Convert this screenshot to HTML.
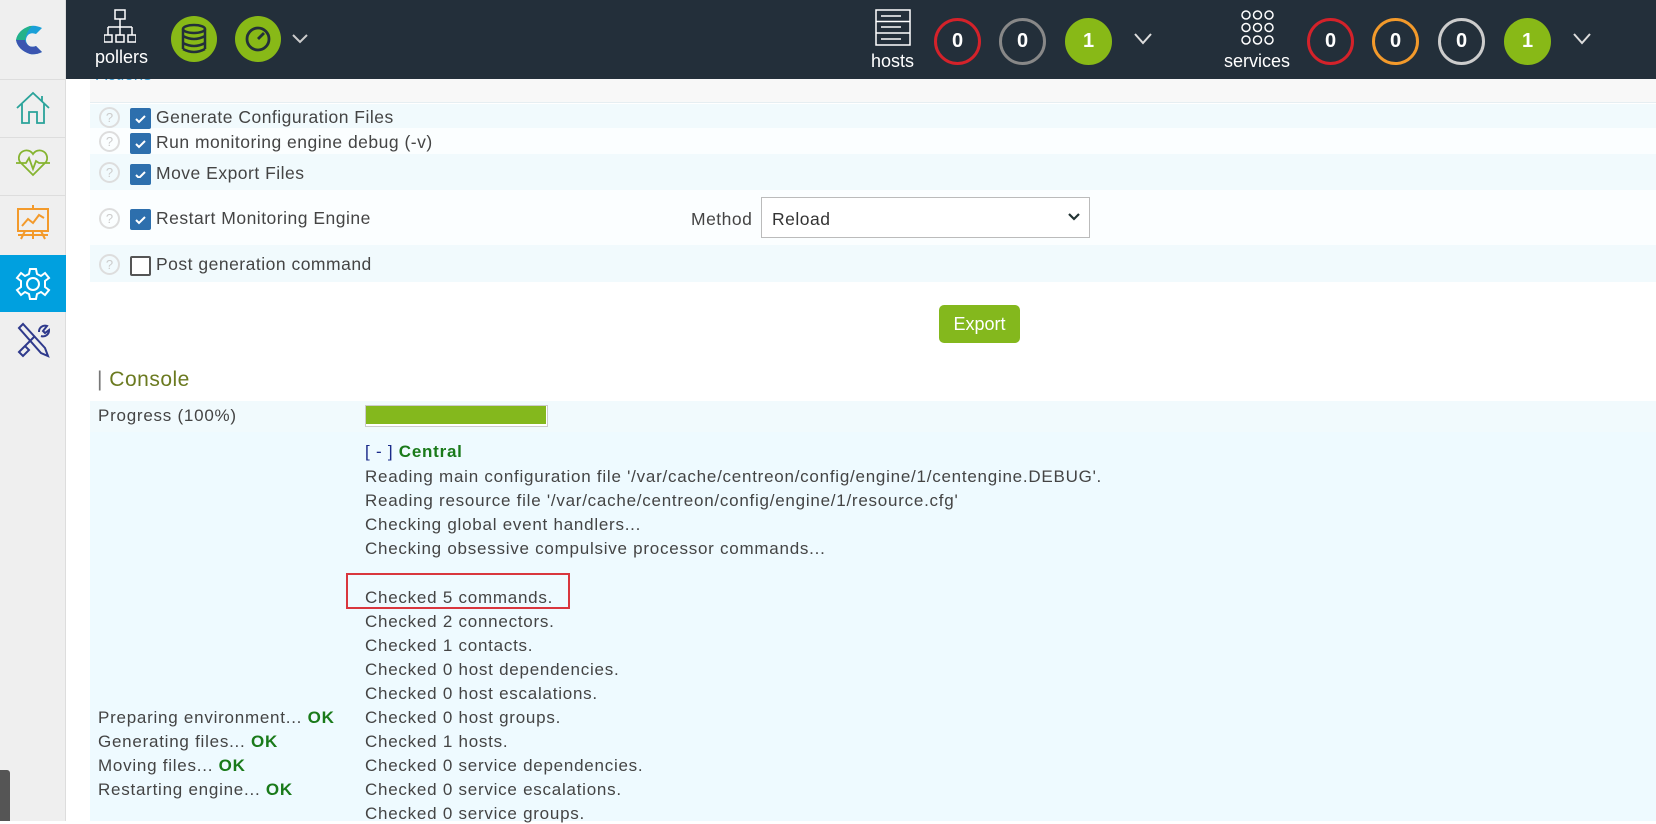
<!DOCTYPE html>
<html><head><meta charset="utf-8">
<style>
*{margin:0;padding:0;box-sizing:border-box}
body{width:1656px;height:821px;overflow:hidden;background:#fff;font-family:"Liberation Sans",sans-serif;position:relative;color:#444}
.a{position:absolute}
.hdr{left:66px;top:0;width:1590px;height:79px;background:#232f3a}
.side{left:0;top:0;width:66px;height:821px;background:#efefef;border-right:1px solid #ddd}
.sep{left:0;width:65px;height:1px;background:#ddd}
.badge{width:47px;height:47px;border-radius:50%;border:3px solid;color:#fff;font-weight:bold;font-size:20px;text-align:center;line-height:41px}
.txt{font-size:17.5px;color:#444;white-space:nowrap;letter-spacing:0.5px}
.q{width:21px;height:21px;border-radius:50%;border:2px solid #ddd;color:#ccc;font-size:13px;text-align:center;line-height:17px}
.cb{width:21px;height:21px;background:#2d6fad;border-radius:2px}
.log{left:365px;font-size:17px;color:#444;white-space:nowrap;letter-spacing:0.75px}
.ok{color:#1a7a1a;font-weight:bold}
</style></head><body>
<div class="a side"></div>
<div class="a sep" style="top:79px"></div><div class="a sep" style="top:137px"></div><div class="a sep" style="top:195px"></div>
<svg class="a" style="left:12px;top:22px" width="40" height="36" viewBox="0 0 40 36"><path d="M30 6 Q24 3 18 4 Q6 8 4 18 Q6 28 18 32 Q24 33 30 30 L24 24 Q19 26 16 23 Q12 18 16 13 Q19 10 24 12 Z" fill="#1aa0d8"/><path d="M4 18 Q6 28 18 32 Q24 33 30 30 L24 24 Q19 26 16 23 Q13 20 13 18Z" fill="#3b55b0"/><path d="M4 18 Q6 8 18 4 L20 4 Q14 10 13 18Z" fill="#23b28a"/></svg>
<svg class="a" style="left:15px;top:90px" width="36" height="36" viewBox="0 0 36 36" fill="none" stroke="#2aa39a" stroke-width="1.8"><path d="M2 18 L18 3 L34 18 M27 6 V12 M7 14 V33 H14 V22 H22 V33 H29 V14"/></svg>
<svg class="a" style="left:15px;top:148px" width="36" height="30" viewBox="0 0 36 30" fill="none" stroke="#86b431" stroke-width="1.8"><path d="M18 27 L5 14 A7 7 0 0 1 18 6 A7 7 0 0 1 31 14 Z M1 15 H11 L14 10 L18 21 L21 13 L24 15 H35"/></svg>
<svg class="a" style="left:15px;top:203px" width="36" height="40" viewBox="0 0 36 40" fill="none" stroke="#f39a2b" stroke-width="2"><path d="M18 2 V6 M3 6 H33 V28 H3 Z M7 23 L13 16 L18 20 L24 12 L29 15 M10 28 L6 36 M26 28 L30 36 M18 28 V36 M3 32 H33"/></svg>
<div class="a" style="left:0;top:255px;width:66px;height:57px;background:#00a0df"></div>
<svg class="a" style="left:15px;top:266px" width="36" height="36" viewBox="0 0 36 36" fill="none" stroke="#fff" stroke-width="2"><circle cx="18" cy="18" r="6"/><path d="M15 3 H21 L22 8 L26 10 L30 7 L34 12 L30 15 L30 21 L34 24 L30 29 L26 26 L22 28 L21 33 H15 L14 28 L10 26 L6 29 L2 24 L6 21 L6 15 L2 12 L6 7 L10 10 L14 8 Z"/></svg>
<svg class="a" style="left:15px;top:322px" width="36" height="36" viewBox="0 0 36 36" fill="none" stroke="#2f3a8c" stroke-width="2"><path d="M4 6 L8 2 L30 26 L33 34 L26 31 Z M4 30 L20 14 M24 10 A6 6 0 0 1 32 4 L28 9 L30 11 L34 8 A6 6 0 0 1 26 14 M4 30 L8 34 L14 28 L10 24 Z"/></svg>
<div class="a" style="left:0;top:770px;width:10px;height:51px;background:#555;border-radius:0 3px 0 0"></div>

<div class="a hdr"></div>
<svg class="a" style="left:104px;top:9px" width="32" height="36" viewBox="0 0 32 36" fill="none" stroke="#fff" stroke-width="1.5"><rect x="11" y="1" width="10" height="9"/><path d="M16 10 V18 M4 18 H28 M4 18 V26 M16 18 V26 M28 18 V26"/><rect x="0" y="26" width="8" height="7"/><rect x="12" y="26" width="8" height="7"/><rect x="24" y="26" width="8" height="7"/></svg>
<div class="a" style="left:95px;top:47px;font-size:18px;color:#fff">pollers</div>
<div class="a" style="left:171px;top:16px;width:46px;height:46px;border-radius:50%;background:#88b917"></div>
<svg class="a" style="left:178px;top:23px" width="32" height="32" viewBox="0 0 32 32" fill="none" stroke="#232f3a" stroke-width="2.5"><ellipse cx="16" cy="6" rx="11" ry="4"/><path d="M5 6 V26 M27 6 V26 M5 13 Q16 19 27 13 M5 20 Q16 26 27 20 M5 26 Q16 32 27 26"/></svg>
<div class="a" style="left:235px;top:16px;width:46px;height:46px;border-radius:50%;background:#88b917"></div>
<svg class="a" style="left:242px;top:23px" width="32" height="32" viewBox="0 0 32 32" fill="none" stroke="#232f3a" stroke-width="2.8"><circle cx="16" cy="16" r="11"/><path d="M16 16 L22 10"/></svg>
<svg class="a" style="left:292px;top:34px" width="16" height="10" viewBox="0 0 16 10" fill="none" stroke="#ccc" stroke-width="2"><path d="M1 1 L8 8 L15 1"/></svg>
<svg class="a" style="left:875px;top:9px" width="36" height="37" viewBox="0 0 36 37" fill="none" stroke="#fff" stroke-width="1.5"><rect x="1" y="1" width="34" height="35"/><path d="M1 12.5 H35 M1 24 H35 M6 7 H26 M6 18 H26 M6 30 H26"/></svg>
<div class="a" style="left:871px;top:51px;font-size:18px;color:#fff">hosts</div>
<div class="a badge" style="left:934px;top:18px;border-color:#d4222a">0</div>
<div class="a badge" style="left:999px;top:18px;border-color:#888">0</div>
<div class="a badge" style="left:1065px;top:18px;border-color:#88b917;background:#88b917">1</div>
<svg class="a" style="left:1134px;top:33px" width="18" height="12" viewBox="0 0 18 12" fill="none" stroke="#ddd" stroke-width="2"><path d="M1 1 L9 10 L17 1"/></svg>
<svg class="a" style="left:1239px;top:9px" width="37" height="37" viewBox="0 0 37 37" fill="none" stroke="#fff" stroke-width="1.5"><g><circle cx="7" cy="6" r="4"/><circle cx="18.5" cy="6" r="4"/><circle cx="30" cy="6" r="4"/><circle cx="7" cy="18.5" r="4"/><circle cx="18.5" cy="18.5" r="4"/><circle cx="30" cy="18.5" r="4"/><circle cx="7" cy="31" r="4"/><circle cx="18.5" cy="31" r="4"/><circle cx="30" cy="31" r="4"/></g></svg>
<div class="a" style="left:1224px;top:51px;font-size:18px;color:#fff">services</div>
<div class="a badge" style="left:1307px;top:18px;border-color:#d4222a">0</div>
<div class="a badge" style="left:1372px;top:18px;border-color:#f39a2b">0</div>
<div class="a badge" style="left:1438px;top:18px;border-color:#ccc">0</div>
<div class="a badge" style="left:1504px;top:18px;border-color:#88b917;background:#88b917">1</div>
<svg class="a" style="left:1573px;top:33px" width="18" height="12" viewBox="0 0 18 12" fill="none" stroke="#ddd" stroke-width="2"><path d="M1 1 L9 10 L17 1"/></svg>

<div class="a" style="left:90px;top:79px;width:1566px;height:24px;background:#f8f8f8;border-bottom:1px solid #e6eef2"></div>
<div class="a" style="left:96px;top:65px;font-size:17px;color:#3d9bd0;clip-path:inset(14px 0 0 0)">Actions</div>
<div class="a" style="left:90px;top:104px;width:1566px;height:24px;background:#f1fafd"></div>
<div class="a" style="left:90px;top:128px;width:1566px;height:26px;background:#fbfeff"></div>
<div class="a" style="left:90px;top:154px;width:1566px;height:36px;background:#f1fafd"></div>
<div class="a" style="left:90px;top:190px;width:1566px;height:55px;background:#fbfeff"></div>
<div class="a" style="left:90px;top:245px;width:1566px;height:37px;background:#f1fafd"></div>

<div class="a q" style="left:99px;top:107px">?</div><div class="a cb" style="left:130px;top:108px"></div><div class="a txt" style="left:156px;top:107px">Generate Configuration Files</div>
<div class="a q" style="left:99px;top:131px">?</div><div class="a cb" style="left:130px;top:133px"></div><div class="a txt" style="left:156px;top:132px">Run monitoring engine debug (-v)</div>
<div class="a q" style="left:99px;top:162px">?</div><div class="a cb" style="left:130px;top:164px"></div><div class="a txt" style="left:156px;top:163px">Move Export Files</div>
<div class="a q" style="left:99px;top:208px">?</div><div class="a cb" style="left:130px;top:209px"></div><div class="a txt" style="left:156px;top:208px">Restart Monitoring Engine</div>
<div class="a q" style="left:99px;top:254px">?</div><div class="a" style="left:130px;top:256px;width:21px;height:20px;border:2.5px solid #555;border-radius:2px;background:#fff"></div><div class="a txt" style="left:156px;top:254px">Post generation command</div>
<svg class="a" style="left:130px;top:108px" width="21" height="70" viewBox="0 0 21 70" fill="none" stroke="#fff" stroke-width="2"><path d="M6 11 L9 14 L15 8"/><path d="M6 36 L9 39 L15 33"/><path d="M6 67 L9 70 L15 64"/></svg>
<svg class="a" style="left:130px;top:209px" width="21" height="21" fill="none" stroke="#fff" stroke-width="2"><path d="M6 11 L9 14 L15 8"/></svg>

<div class="a txt" style="left:691px;top:209px">Method</div>
<div class="a" style="left:761px;top:197px;width:329px;height:41px;border:1px solid #bbb;background:#fff"></div>
<div class="a txt" style="left:772px;top:209px;color:#333">Reload</div>
<svg class="a" style="left:1068px;top:213px" width="12" height="9" fill="none" stroke="#233" stroke-width="2.2"><path d="M1 1 L6 6 L11 1"/></svg>

<div class="a" style="left:939px;top:305px;width:81px;height:38px;border-radius:5px;background:#84b81d;color:#fff;font-size:18px;text-align:center;line-height:38px">Export</div>

<div class="a" style="left:97px;top:368px;font-size:21px;color:#6b7a20;letter-spacing:0.5px"><span style="color:#777">|</span> Console</div>
<div class="a" style="left:90px;top:401px;width:1566px;height:31px;background:#f1fafd"></div>
<div class="a log" style="left:98px;top:406px">Progress (100%)</div>
<div class="a" style="left:365px;top:405px;width:183px;height:22px;border:1px solid #ccc;background:#fff"></div>
<div class="a" style="left:366px;top:406px;width:180px;height:18px;background:#84b81d"></div>
<div class="a" style="left:90px;top:432px;width:1566px;height:389px;background:#eefaff"></div>

<div class="a log" style="top:442px"><span style="color:#1a2a8a">[ - ]</span> <b style="color:#1a7a1a">Central</b></div>
<div class="a log" style="top:467px">Reading main configuration file '/var/cache/centreon/config/engine/1/centengine.DEBUG'.</div>
<div class="a log" style="top:491px">Reading resource file '/var/cache/centreon/config/engine/1/resource.cfg'</div>
<div class="a log" style="top:515px">Checking global event handlers...</div>
<div class="a log" style="top:539px">Checking obsessive compulsive processor commands...</div>
<div class="a" style="left:346px;top:573px;width:224px;height:36px;border:2px solid #d9363e"></div>
<div class="a log" style="top:588px">Checked 5 commands.</div>
<div class="a log" style="top:612px">Checked 2 connectors.</div>
<div class="a log" style="top:636px">Checked 1 contacts.</div>
<div class="a log" style="top:660px">Checked 0 host dependencies.</div>
<div class="a log" style="top:684px">Checked 0 host escalations.</div>
<div class="a log" style="top:708px">Checked 0 host groups.</div>
<div class="a log" style="top:732px">Checked 1 hosts.</div>
<div class="a log" style="top:756px">Checked 0 service dependencies.</div>
<div class="a log" style="top:780px">Checked 0 service escalations.</div>
<div class="a log" style="top:804px">Checked 0 service groups.</div>

<div class="a log" style="left:98px;top:708px">Preparing environment... <span class="ok">OK</span></div>
<div class="a log" style="left:98px;top:732px">Generating files... <span class="ok">OK</span></div>
<div class="a log" style="left:98px;top:756px">Moving files... <span class="ok">OK</span></div>
<div class="a log" style="left:98px;top:780px">Restarting engine... <span class="ok">OK</span></div>
</body></html>
